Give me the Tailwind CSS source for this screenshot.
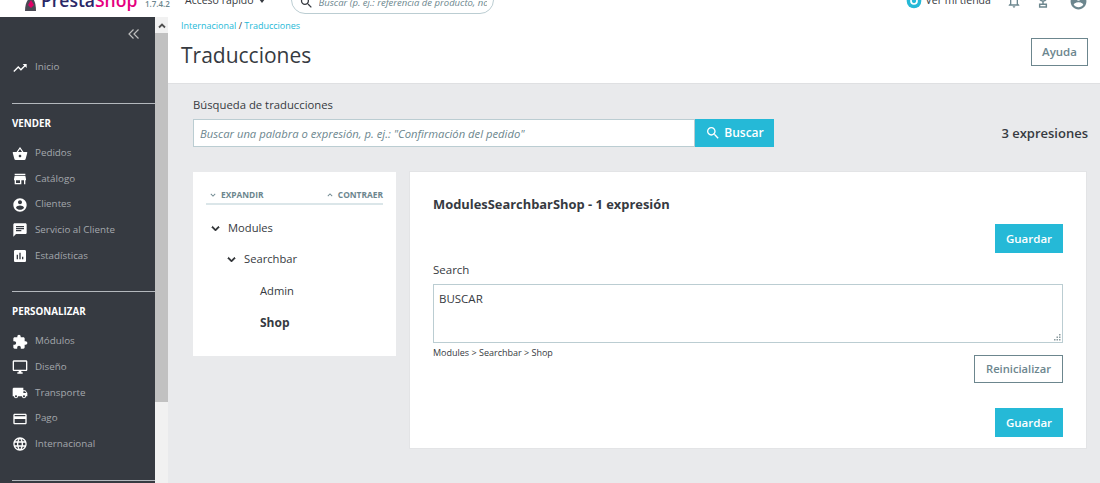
<!doctype html>
<html lang="es">
<head>
<meta charset="utf-8">
<title>Traducciones</title>
<script src="https://cdn.jsdelivr.net/npm/@tailwindcss/browser@4"></script>
</head>
<body class="h-[483px] w-[1100px] overflow-hidden bg-white font-['Open_Sans',sans-serif] text-[#363a41]">
<header class="h-[17px] overflow-hidden bg-white">
  <div class="-mt-[20px] flex h-[44px] items-center">
    <svg class="ml-[24px] h-[20px] w-[13px]" viewBox="0 0 13 20"><path d="M1 19c0-8 3-13 6-13s5 5 5 13z" fill="#4a4a55"/><path d="M4 13l3-5 3 5-3 3z" fill="#df0067"/></svg>
    <span class="mb-[3px] ml-[4px] w-[95px] text-[17.500px] leading-none font-semibold whitespace-nowrap text-[#2a2766]">Presta<span class="text-[#e5007e]">Shop</span></span>
    <span class="ml-[9px] mt-[3px] w-[25px] text-[8px] font-semibold text-[#6c868e]">1.7.4.2</span>
    <span class="ml-[15px] mb-[3px] text-[10.500px] text-[#363a41]">Acceso rápido</span>
    <span class="ml-[5px] mb-[3px] h-0 w-0 border-x-[3.500px] border-t-[4px] border-x-transparent border-t-[#363a41]"></span>
    <div class="mb-[4px] ml-[26px] flex h-[28px] w-[203px] items-end gap-[5px] overflow-hidden rounded-[14px] border border-[#bbcdd2] pb-[3px] pl-[7px]">
      <svg class="h-[15px] w-[15px] shrink-0" viewBox="0 0 24 24" fill="#363a41"><path d="M15.500 14h-.79l-.28-.27C15.410 12.590 16 11.110 16 9.500 16 5.910 13.090 3 9.500 3S3 5.910 3 9.500 5.910 16 9.500 16c1.610 0 3.090-.59 4.230-1.570l.27.280v.79l5 4.990L20.490 19l-4.990-5zm-6 0C7.010 14 5 11.990 5 9.500S7.010 5 9.500 5 14 7.010 14 9.500 11.990 14 9.500 14z"/></svg>
      <span class="w-[168px] overflow-hidden text-[9.500px] leading-[14px] whitespace-nowrap text-[#6c868e] italic">Buscar (p. ej.: referencia de producto, nombre</span>
    </div>
    <svg class="ml-[412px] mb-[3px] h-[16px] w-[16px]" viewBox="0 0 24 24"><circle cx="12" cy="12" r="11" fill="#25b9d7"/><circle cx="12" cy="12" r="4.500" fill="none" stroke="#fff" stroke-width="2.500"/></svg>
    <span class="ml-[4px] mb-[3px] text-[10.500px] text-[#363a41]">Ver mi tienda</span>
    <svg class="ml-[15px] mb-[3px] h-[16px] w-[16px]" viewBox="0 0 24 24" fill="#6c868e"><path d="M12 22c1.100 0 2-.9 2-2h-4c0 1.100.9 2 2 2zm6-6v-5c0-3.070-1.630-5.640-4.500-6.320V4c0-.83-.67-1.500-1.500-1.500s-1.500.67-1.500 1.500v.68C7.640 5.360 6 7.920 6 11v5l-2 2v1h16v-1l-2-2zm-2 1H8v-6c0-2.480 1.510-4.500 4-4.500s4 2.020 4 4.500v6z"/></svg>
    <svg class="ml-[13px] mb-[2px] h-[16px] w-[16px]" viewBox="0 0 24 24" fill="none" stroke="#6c868e" stroke-width="2.200"><circle cx="12" cy="7" r="5"/><path d="M12 12v5M7 21h10v-4H7z"/></svg>
    <svg class="ml-[18px] mb-[2px] h-[19px] w-[19px]" viewBox="0 0 24 24" fill="#6c868e"><path d="M12 2C6.480 2 2 6.480 2 12s4.480 10 10 10 10-4.480 10-10S17.520 2 12 2zm0 3c1.660 0 3 1.340 3 3s-1.340 3-3 3-3-1.340-3-3 1.340-3 3-3zm0 14.200c-2.500 0-4.710-1.280-6-3.220.03-1.990 4-3.080 6-3.080 1.990 0 5.970 1.090 6 3.080-1.290 1.940-3.500 3.220-6 3.220z"/></svg>
  </div>
</header>
<div class="flex h-[466px]">
  <nav class="w-[155px] shrink-0 overflow-hidden bg-[#363a41] text-[9.800px] text-[#a4a8ad]">
    <div class="flex h-[34px] items-center justify-end pr-[15px]">
      <svg class="h-[12px] w-[12px]" viewBox="0 0 12 12" fill="none" stroke="#bebebe" stroke-width="1.200"><path d="M5.500 1.500 1 6l4.500 4.500M10.500 1.500 6 6l4.500 4.500"/></svg>
    </div>
    <a class="flex h-[32px] items-center gap-[7px] pl-[12px] pt-[1px]"><svg class="h-[16px] w-[16px] shrink-0" viewBox="0 0 24 24" fill="#fff"><path d="M16 6l2.290 2.290-4.880 4.880-4-4L2 16.590 3.410 18l6-6 4 4 6.300-6.290L22 12V6z"/></svg>Inicio</a>
    <div class="h-[20px]"></div>
    <div class="ml-[12px] h-px bg-[#b4b8bd]"></div>
    <div class="flex h-[36px] items-center pl-[12px] pt-[5px] text-[9.800px] font-bold text-white">VENDER</div>
    <a class="flex h-[25.670px] items-center gap-[7px] pl-[12px] pt-[2px]"><svg class="h-[16px] w-[16px] shrink-0" viewBox="0 0 24 24" fill="#fff"><path d="M17.210 9l-4.380-6.560c-.19-.28-.51-.42-.83-.42-.32 0-.64.14-.83.43L6.790 9H2c-.55 0-1 .45-1 1 0 .09.01.18.04.27l2.540 9.270c.23.84 1 1.460 1.920 1.460h13c.92 0 1.690-.62 1.930-1.460l2.540-9.270L23 10c0-.55-.45-1-1-1h-4.790zM9 9l3-4.400L15 9H9zm3 8c-1.100 0-2-.9-2-2s.9-2 2-2 2 .9 2 2-.9 2-2 2z"/></svg>Pedidos</a>
    <a class="flex h-[25.670px] items-center gap-[7px] pl-[12px] pt-[1px]"><svg class="h-[16px] w-[16px] shrink-0" viewBox="0 0 24 24" fill="#fff"><path d="M20 4H4v2h16V4zm1 10v-2l-1-5H4l-1 5v2h1v6h10v-6h4v6h2v-6h1zm-9 4H6v-4h6v4z"/></svg>Catálogo</a>
    <a class="flex h-[25.670px] items-center gap-[7px] pl-[12px] pt-[1px]"><svg class="h-[16px] w-[16px] shrink-0" viewBox="0 0 24 24" fill="#fff"><path d="M12 2C6.480 2 2 6.480 2 12s4.480 10 10 10 10-4.480 10-10S17.520 2 12 2zm0 3c1.660 0 3 1.340 3 3s-1.340 3-3 3-3-1.340-3-3 1.340-3 3-3zm0 14.200c-2.500 0-4.710-1.280-6-3.220.03-1.990 4-3.080 6-3.080 1.990 0 5.970 1.090 6 3.080-1.290 1.940-3.500 3.220-6 3.220z"/></svg>Clientes</a>
    <a class="flex h-[25.670px] items-center gap-[7px] pl-[12px] pt-[1px]"><svg class="h-[16px] w-[16px] shrink-0" viewBox="0 0 24 24" fill="#fff"><path d="M20 2H4c-1.100 0-1.990.9-1.990 2L2 22l4-4h14c1.100 0 2-.9 2-2V4c0-1.100-.9-2-2-2zM6 9h12v2H6V9zm8 5H6v-2h8v2zm4-6H6V6h12v2z"/></svg>Servicio al Cliente</a>
    <a class="flex h-[25.670px] items-center gap-[7px] pl-[12px] pt-[1px]"><svg class="h-[16px] w-[16px] shrink-0" viewBox="0 0 24 24" fill="#fff"><path d="M19 3H5c-1.100 0-2 .9-2 2v14c0 1.100.9 2 2 2h14c1.100 0 2-.9 2-2V5c0-1.100-.9-2-2-2zM9 17H7v-7h2v7zm4 0h-2V7h2v10zm4 0h-2v-4h2v4z"/></svg>Estadísticas</a>
    <div class="h-[23px]"></div>
    <div class="ml-[12px] h-px bg-[#b4b8bd]"></div>
    <div class="flex h-[36px] items-center pl-[12px] pt-[5px] text-[9.800px] font-bold text-white">PERSONALIZAR</div>
    <a class="flex h-[25.670px] items-center gap-[7px] pl-[12px] pt-[1px]"><svg class="h-[16px] w-[16px] shrink-0" viewBox="0 0 24 24" fill="#fff"><path d="M20.500 11H19V7c0-1.100-.9-2-2-2h-4V3.500C13 2.120 11.880 1 10.500 1S8 2.120 8 3.500V5H4c-1.100 0-1.990.9-1.990 2v3.800H3.500c1.490 0 2.700 1.210 2.700 2.700s-1.210 2.700-2.700 2.700H2V20c0 1.100.9 2 2 2h3.800v-1.500c0-1.490 1.210-2.700 2.700-2.700 1.490 0 2.700 1.210 2.700 2.700V22H17c1.100 0 2-.9 2-2v-4h1.500c1.380 0 2.500-1.120 2.500-2.500S21.880 11 20.500 11z"/></svg>Módulos</a>
    <a class="flex h-[25.670px] items-center gap-[7px] pl-[12px] pt-[1px]"><svg class="h-[16px] w-[16px] shrink-0" viewBox="0 0 24 24" fill="#fff"><path d="M21 2H3c-1.100 0-2 .9-2 2v12c0 1.100.9 2 2 2h7v2H8v2h8v-2h-2v-2h7c1.100 0 2-.9 2-2V4c0-1.100-.9-2-2-2zm0 14H3V4h18v12z"/></svg>Diseño</a>
    <a class="flex h-[25.670px] items-center gap-[7px] pl-[12px] pt-[1px]"><svg class="h-[16px] w-[16px] shrink-0" viewBox="0 0 24 24" fill="#fff"><path d="M20 8h-3V4H3c-1.100 0-2 .9-2 2v11h2c0 1.660 1.340 3 3 3s3-1.340 3-3h6c0 1.660 1.340 3 3 3s3-1.340 3-3h2v-5l-3-4zM6 18.500c-.83 0-1.500-.67-1.500-1.500s.67-1.500 1.500-1.500 1.500.67 1.500 1.500-.67 1.500-1.500 1.500zm13.500-9l1.960 2.500H17V9.500h2.500zm-1.500 9c-.83 0-1.500-.67-1.500-1.500s.67-1.500 1.500-1.500 1.500.67 1.500 1.500-.67 1.500-1.500 1.500z"/></svg>Transporte</a>
    <a class="flex h-[25.670px] items-center gap-[7px] pl-[12px] pt-[1px]"><svg class="h-[16px] w-[16px] shrink-0" viewBox="0 0 24 24" fill="#fff"><path d="M20 4H4c-1.110 0-1.990.89-1.990 2L2 18c0 1.110.89 2 2 2h16c1.110 0 2-.89 2-2V6c0-1.110-.89-2-2-2zm0 14H4v-6h16v6zm0-10H4V6h16v2z"/></svg>Pago</a>
    <a class="flex h-[25.670px] items-center gap-[7px] pl-[12px] pt-[1px]"><svg class="h-[16px] w-[16px] shrink-0" viewBox="0 0 24 24" fill="#fff"><path d="M11.990 2C6.470 2 2 6.480 2 12s4.470 10 9.990 10C17.520 22 22 17.520 22 12S17.520 2 11.990 2zm6.930 6h-2.950c-.32-1.250-.78-2.450-1.380-3.560 1.840.63 3.370 1.910 4.330 3.560zM12 4.040c.83 1.200 1.480 2.530 1.910 3.960h-3.820c.43-1.430 1.080-2.760 1.910-3.960zM4.260 14C4.100 13.360 4 12.690 4 12s.1-1.360.26-2h3.380c-.08.66-.14 1.320-.14 2 0 .68.06 1.340.14 2H4.260zm.82 2h2.950c.32 1.250.78 2.450 1.380 3.560-1.840-.63-3.370-1.900-4.330-3.560zm2.950-8H5.080c.96-1.660 2.490-2.930 4.330-3.560C8.810 5.550 8.350 6.750 8.030 8zM12 19.960c-.83-1.200-1.480-2.530-1.910-3.960h3.820c-.43 1.430-1.080 2.760-1.910 3.960zM14.340 14H9.660c-.09-.66-.16-1.320-.16-2 0-.68.07-1.350.16-2h4.680c.09.650.16 1.320.16 2 0 .68-.07 1.340-.16 2zm.25 5.560c.6-1.110 1.060-2.310 1.380-3.560h2.950c-.96 1.650-2.490 2.930-4.330 3.560zM16.360 14c.08-.66.14-1.320.14-2 0-.68-.06-1.340-.14-2h3.380c.16.640.26 1.310.26 2s-.1 1.360-.26 2h-3.380z"/></svg>Internacional</a>
    <div class="h-[23.600px]"></div>
    <div class="ml-[12px] h-px bg-[#b4b8bd]"></div>
  </nav>
  <div class="flex w-[13px] shrink-0 flex-col bg-[#f1f1f1]">
    <div class="flex h-[16px] items-center justify-center"><svg class="h-[7px] w-[8px]" viewBox="0 0 8 7" fill="none" stroke="#505050" stroke-width="1.800"><path d="M1 5.500l3-3 3 3"/></svg></div>
    <div class="h-[369px] bg-[#c1c1c1]"></div>
  </div>
  <main class="min-w-0 flex-1 bg-[#e9eaec]">
    <div class="flex h-[67px] justify-between border-b border-[#dfe0e2] bg-white pl-[13px] pr-[12px]">
      <div>
        <div class="flex h-[18px] items-center text-[9px] text-[#363a41]"><span class="text-[#25b9d7]">Internacional</span>&nbsp;/&nbsp;<span class="text-[#25b9d7]">Traducciones</span></div>
        <h1 class="mt-[5px] text-[21px] leading-[30px] font-normal">Traducciones</h1>
      </div>
      <button class="mt-[21px] h-[28px] w-[57px] border border-[#6c868e] text-[11.500px] font-semibold text-[#6c868e]">Ayuda</button>
    </div>
    <div class="pl-[25px] pr-[12px]">
      <label class="flex h-[35px] items-center pt-[8px] text-[11.300px] text-[#363a41]">Búsqueda de traducciones</label>
      <div class="flex h-[28px] items-center justify-between">
        <div class="flex h-full">
          <input class="h-full w-[502px] border border-[#bbcdd2] bg-white px-[6px] text-[11.250px] placeholder:text-[#6c868e] placeholder:italic" placeholder="Buscar una palabra o expresión, p. ej.: &quot;Confirmación del pedido&quot;">
          <button class="flex h-full w-[79px] items-center justify-center gap-[3px] bg-[#25b9d7] text-[12px] font-semibold text-white"><svg class="h-[16px] w-[16px]" viewBox="0 0 24 24" fill="#fff"><path d="M15.500 14h-.79l-.28-.27C15.410 12.590 16 11.110 16 9.500 16 5.910 13.090 3 9.500 3S3 5.910 3 9.500 5.910 16 9.500 16c1.610 0 3.090-.59 4.230-1.570l.27.280v.79l5 4.990L20.490 19l-4.990-5zm-6 0C7.010 14 5 11.990 5 9.500S7.010 5 9.500 5 14 7.010 14 9.500 11.990 14 9.500 14z"/></svg>Buscar</button>
        </div>
        <span class="mt-[2px] text-[13px] font-semibold text-[#363a41]">3 expresiones</span>
      </div>
      <div class="mt-[25px] flex items-start gap-[13px]">
        <aside class="h-[184px] w-[203px] shrink-0 bg-white px-[13px] pt-[16px]">
          <div class="flex h-[17px] items-start justify-between border-b-2 border-[#dbe6e9] pl-[2px] text-[8.400px] leading-[14px] font-bold text-[#6c868e]">
            <span class="flex items-center gap-[3px]"><svg class="h-[10px] w-[10px]" viewBox="0 0 24 24" fill="#6c868e"><path d="M7.410 8.590L12 13.170l4.590-4.580L18 10l-6 6-6-6 1.410-1.410z"/></svg>EXPANDIR</span>
            <span class="flex items-center gap-[3px]"><svg class="h-[10px] w-[10px]" viewBox="0 0 24 24" fill="#6c868e"><path d="M7.410 15.410L12 10.830l4.590 4.580L18 14l-6-6-6 6z"/></svg>CONTRAER</span>
          </div>
          <div class="mt-[8px] text-[11.200px] text-[#363a41]">
            <div class="flex h-[31px] items-center gap-[5px] pl-[2px]"><svg class="h-[15px] w-[15px]" viewBox="0 0 24 24" fill="#25282c" stroke="#25282c" stroke-width="1"><path d="M7.410 8.590L12 13.170l4.590-4.580L18 10l-6 6-6-6 1.410-1.410z"/></svg>Modules</div>
            <div class="flex h-[31px] items-center gap-[5px] pl-[18px]"><svg class="h-[15px] w-[15px]" viewBox="0 0 24 24" fill="#25282c" stroke="#25282c" stroke-width="1"><path d="M7.410 8.590L12 13.170l4.590-4.580L18 10l-6 6-6-6 1.410-1.410z"/></svg>Searchbar</div>
            <div class="flex h-[32px] items-center pl-[54px]">Admin</div>
            <div class="flex h-[32px] items-center pl-[54px] text-[12px] font-bold">Shop</div>
          </div>
        </aside>
        <section class="-mt-px flex h-[278px] w-[678px] flex-col border border-[#e3e4e6] bg-white px-[23px]">
          <h2 class="mt-[22px] text-[12.900px] leading-[20px] font-bold text-[#363a41]">ModulesSearchbarShop - 1 expresión</h2>
          <button class="mt-[10px] h-[29px] w-[68px] self-end bg-[#25b9d7] text-[11.500px] font-semibold text-white">Guardar</button>
          <label class="mt-[9px] text-[11.500px] leading-[16px] text-[#363a41]">Search</label>
          <div class="relative mt-[6px] h-[59px]">
            <textarea class="block h-full w-full resize-none border border-[#bbcdd2] px-[5px] pt-[6px] text-[11.500px] leading-[16px] text-[#363a41]">BUSCAR</textarea>
            <svg class="absolute right-[2px] bottom-[2px] h-[7px] w-[7px]" viewBox="0 0 7 7" fill="#8a9a9e"><rect x="5" y="0" width="1.500" height="1.500"/><rect x="2.500" y="2.500" width="1.500" height="1.500"/><rect x="5" y="2.500" width="1.500" height="1.500"/><rect x="0" y="5" width="1.500" height="1.500"/><rect x="2.500" y="5" width="1.500" height="1.500"/><rect x="5" y="5" width="1.500" height="1.500"/></svg>
          </div>
          <div class="mt-[4px] h-[8px] text-[9px] leading-[12px] text-[#363a41]">Modules &gt; Searchbar &gt; Shop</div>
          <button class="h-[28px] w-[89px] self-end border border-[#6c868e] text-[11.200px] font-semibold text-[#6c868e]">Reinicializar</button>
          <button class="mt-[25px] h-[29px] w-[68px] self-end bg-[#25b9d7] text-[11.500px] font-semibold text-white">Guardar</button>
        </section>
      </div>
    </div>
  </main>
</div>
</body>
</html>
